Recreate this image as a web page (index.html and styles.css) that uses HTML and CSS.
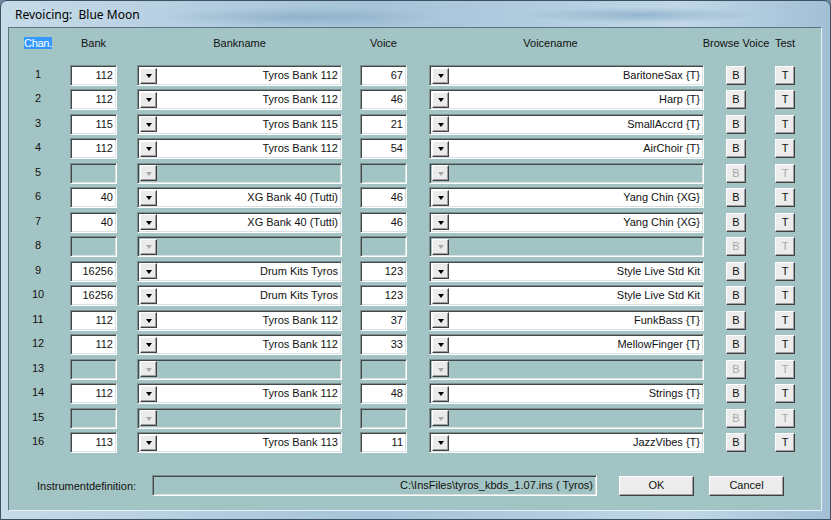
FILE: index.html
```html
<!DOCTYPE html>
<html>
<head>
<meta charset="utf-8">
<title>Revoicing</title>
<link rel="stylesheet" href="styles.css">
</head>
<body>
<div class="window">
  <div class="titlebar"><span class="title">Revoicing:&nbsp; Blue Moon</span></div>
  <div class="client">
    <div class="grid head">
      <div class="hcell chan"><span class="sel">Chan.</span></div>
      <div class="hcell w-edit">Bank</div>
      <div class="hcell w-bn">Bankname</div>
      <div class="hcell w-edit">Voice</div>
      <div class="hcell w-vn">Voicename</div>
      <div class="hcell w-browse">Browse Voice</div>
      <div class="hcell w-test">Test</div>
    </div>
    <div class="grid rows" id="rows"></div>
    <div class="footer">
      <span class="flabel">Instrumentdefinition:</span>
      <div class="ffield">C:\InsFiles\tyros_kbds_1.07.ins ( Tyros)</div>
      <div class="pbtn ok">OK</div>
      <div class="pbtn cancel">Cancel</div>
    </div>
  </div>
</div>
<script src="app.js"></script>
</body>
</html>
```
FILE: app.js
```js
var data = [
  ["112","Tyros Bank 112","67","BaritoneSax {T}"],
  ["112","Tyros Bank 112","46","Harp {T}"],
  ["115","Tyros Bank 115","21","SmallAccrd {T}"],
  ["112","Tyros Bank 112","54","AirChoir {T}"],
  null,
  ["40","XG Bank 40 (Tutti)","46","Yang Chin {XG}"],
  ["40","XG Bank 40 (Tutti)","46","Yang Chin {XG}"],
  null,
  ["16256","Drum Kits Tyros","123","Style Live Std Kit"],
  ["16256","Drum Kits Tyros","123","Style Live Std Kit"],
  ["112","Tyros Bank 112","37","FunkBass {T}"],
  ["112","Tyros Bank 112","33","MellowFinger {T}"],
  null,
  ["112","Tyros Bank 112","48","Strings {T}"],
  null,
  ["113","Tyros Bank 113","11","JazzVibes {T}"]
];
var html = "";
data.forEach(function (r, i) {
  var d = r ? "" : " dis";
  r = r || ["", "", "", ""];
  html += '<div class="num">' + (i + 1) + '</div>' +
    '<div class="cell"><div class="edit' + d + '">' + r[0] + '</div></div>' +
    '<div class="cell"><div class="combo bn' + d + '"><span class="arrow"></span><span class="ctext">' + r[1] + '</span></div></div>' +
    '<div class="cell"><div class="edit' + d + '">' + r[2] + '</div></div>' +
    '<div class="cell"><div class="combo vn' + d + '"><span class="arrow"></span><span class="ctext">' + r[3] + '</span></div></div>' +
    '<div class="cell"><div class="sbtn' + d + '">B</div></div>' +
    '<div class="cell"><div class="sbtn' + d + '">T</div></div>';
});
document.getElementById("rows").innerHTML = html;
```
FILE: styles.css
```css
html, body {
  margin: 0;
  padding: 0;
  background: #6e8aa0;
}
body {
  font-family: "Liberation Sans", Arial, sans-serif;
  font-size: 11px;
  color: #111;
}
.window {
  width: 831px;
  height: 520px;
  box-sizing: border-box;
  padding: 0 8px 8px 7px;
  display: flex;
  flex-direction: column;
  border: 1px solid #3f5060;
  border-radius: 7px 7px 0 0;
  background:
    radial-gradient(ellipse 140px 10px at 300px 16px, rgba(120,160,190,0.55), rgba(120,160,190,0) 100%),
    radial-gradient(ellipse 120px 8px at 640px 14px, rgba(110,150,180,0.5), rgba(110,150,180,0) 100%),
    linear-gradient(90deg, #c6dbe8 0%, #b7d0e2 20%, #a6c3d9 45%, #b2cce0 65%, #c0d8e8 82%, #a2bfd6 100%);
}
.titlebar {
  height: 26px;
  flex: none;
  display: flex;
  align-items: center;
  padding-left: 7px;
}
.title {
  font-family: "Noto Sans", "Liberation Sans", sans-serif;
  font-size: 12px;
  color: #000;
  white-space: pre;
  margin-top: 1px;
}
.client {
  flex: 1;
  background: #a3c4c4;
  border: 1px solid #5d7384;
  border-right-color: #e8f2f8;
  border-bottom-color: #e8f2f8;
  padding: 0 0 0 11px;
  display: flex;
  flex-direction: column;
}
.grid {
  display: grid;
  grid-template-columns: 50px 67px 223px 69px 297px 49px 20px;
}
.head {
  margin-top: 8px;
  height: 14px;
  line-height: 14px;
}
.hcell {
  text-align: center;
  white-space: nowrap;
}
.hcell.chan { width: 36px; }
.sel {
  background: #3399ff;
  color: #fff;
  padding: 0;
  letter-spacing: -0.3px;
}
.w-edit { width: 47px; }
.w-bn { width: 205px; }
.w-vn { width: 275px; padding-right: 32px; box-sizing: border-box; }
.w-browse { width: 20px; display: flex; justify-content: center; }
.w-test { width: 20px; display: flex; justify-content: center; }
.rows {
  margin-top: 15px;
  grid-auto-rows: 21px;
  row-gap: 3.47px;
}
.num {
  width: 36px;
  text-align: center;
  line-height: 19px;
}
.cell {
  display: flex;
  align-items: center;
}
.edit, .combo, .ffield {
  box-sizing: border-box;
  height: 21px;
  border: 1px solid;
  border-color: #7f8f8f #ffffff #ffffff #7f8f8f;
  box-shadow: inset 1px 1px 0 #404848, inset -1px -1px 0 #d8e2e2;
  background: #fff;
}
.edit {
  width: 47px;
  text-align: right;
  padding-right: 3px;
  line-height: 19px;
}
.edit.dis, .combo.dis { background: #a3c4c4; }
.combo {
  display: flex;
  align-items: center;
  padding: 1px 1px 1px 2px;
}
.combo.bn { width: 205px; }
.combo.vn { width: 275px; }
.arrow {
  flex: none;
  width: 17px;
  height: 16px;
  box-sizing: border-box;
  background: #ebebeb;
  border: 1px solid;
  border-color: #ffffff #404040 #404040 #ffffff;
  box-shadow: inset -1px -1px 0 #a0a0a0;
  display: flex;
  align-items: center;
  justify-content: center;
}
.arrow::before {
  content: "";
  width: 0;
  height: 0;
  border-top: 4px solid #000;
  border-left: 3.5px solid transparent;
  border-right: 3.5px solid transparent;
  margin-top: 1px;
}
.dis .arrow::before { border-top-color: #a8a8a8; }
.ctext {
  flex: 1;
  text-align: right;
  padding-right: 2px;
  white-space: nowrap;
  line-height: 17px;
}
.sbtn {
  box-sizing: border-box;
  width: 20px;
  height: 19px;
  background: #ececec;
  border: 1px solid;
  border-color: #ffffff #404040 #404040 #ffffff;
  box-shadow: inset -1px -1px 0 #a0a0a0;
  text-align: center;
  line-height: 16px;
}
.sbtn.dis { color: #a8a8a8; }
.footer {
  margin-top: 22px;
  display: flex;
  align-items: center;
  padding-left: 17px;
}
.flabel {
  width: 115px;
  white-space: nowrap;
}
.ffield {
  width: 445px;
  background: #a3c4c4;
  text-align: right;
  padding-right: 3px;
  line-height: 19px;
  white-space: nowrap;
}
.pbtn {
  box-sizing: border-box;
  width: 75px;
  height: 20px;
  background: #ececec;
  border: 1px solid;
  border-color: #ffffff #404040 #404040 #ffffff;
  box-shadow: inset -1px -1px 0 #a0a0a0;
  text-align: center;
  line-height: 17px;
}
.ok { margin-left: 22px; }
.cancel { margin-left: 15px; }
```
